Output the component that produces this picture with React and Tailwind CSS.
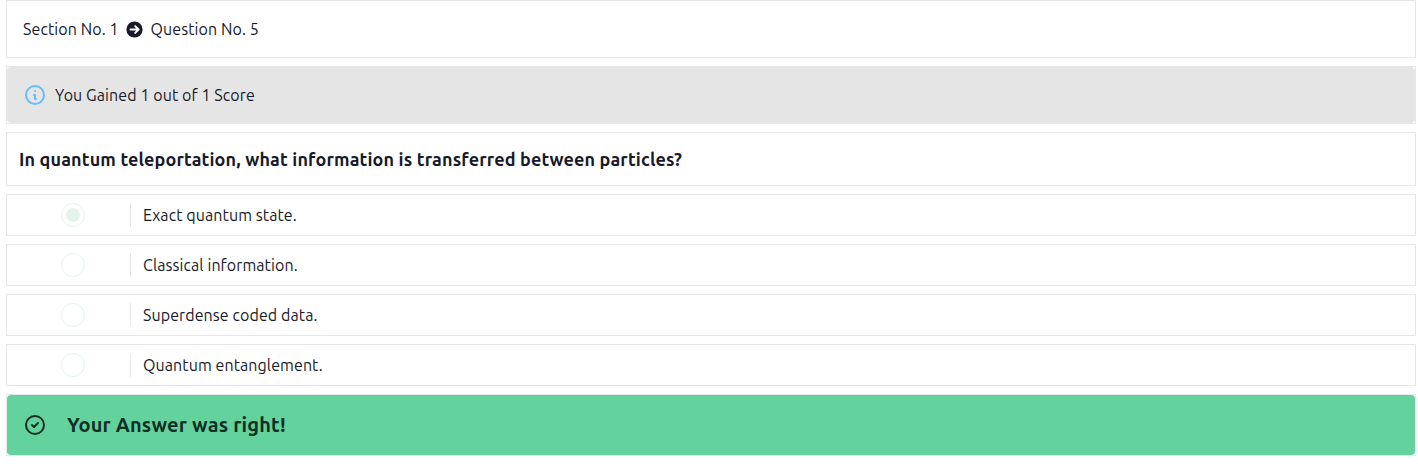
const options = [
  { text: "Exact quantum state.", checked: true },
  { text: "Classical information." },
  { text: "Superdense coded data." },
  { text: "Quantum entanglement." },
];

function Icon({ d, className = "" }) {
  return (
    <svg viewBox="0 0 24 24" fill="none" stroke="currentColor" strokeWidth="2" strokeLinecap="round" strokeLinejoin="round" className={`size-6 shrink-0 ${className}`}>
      <path d={d} />
    </svg>
  );
}

function ArrowCircle() {
  return (
    <svg viewBox="0 0 17 17" className="size-[17px] shrink-0">
      <circle cx="8.5" cy="8.5" r="8.1" fill="currentColor" />
      <path d="M4.5 8.5h8M9.2 5.1l3.4 3.4-3.4 3.4" fill="none" stroke="white" strokeWidth="1.9" strokeLinecap="round" strokeLinejoin="round" />
    </svg>
  );
}

function Option({ text, checked }) {
  return (
    <div className="flex h-[42px] items-center border border-[#e5e7eb]">
      <div className="flex w-[123px] shrink-0 justify-center pl-[9px]">
        <span className="flex size-6 items-center justify-center rounded-full border border-[#e4f3ec]">
          {checked && <span className="size-3.5 rounded-full bg-[#e4f3ec]" />}
        </span>
      </div>
      <div className="flex h-6 items-center border-l border-[#e5e7eb] pl-3">
        <span className="whitespace-nowrap">{text}</span>
      </div>
    </div>
  );
}

export default function App() {
  return (
    <main className="mr-0.5 ml-1.5 flex flex-col gap-2 bg-white font-['Ubuntu','Noto_Sans',sans-serif] text-base tracking-[0.09px] text-[#181a2a]">
      <header className="flex h-[58px] items-center border border-[#e5e7eb] pl-4 whitespace-nowrap">
        <span className="w-[103px]">Section No. 1</span>
        <ArrowCircle />
        <span className="ml-[7.5px]">Question No. 5</span>
      </header>
      <section className="h-[58px] border border-[#e5e7eb]">
        <div className="flex h-full items-center gap-2 rounded bg-[#e5e5e5] pl-4">
          <Icon className="text-[#66bdfb]" d="M13 16h-1v-4h-1m1-4h.01M21 12a9 9 0 11-18 0 9 9 0 0118 0z" />
          <span className="whitespace-nowrap">You Gained 1 out of 1 Score</span>
        </div>
      </section>
      <section className="flex h-[54px] items-center border border-[#e5e7eb] pl-3">
        <h1 className="text-lg font-bold tracking-[0.135px] whitespace-nowrap">In quantum teleportation, what information is transferred between particles?</h1>
      </section>
      {options.map((option) => (
        <Option key={option.text} {...option} />
      ))}
      <section className="h-[62px] border border-[#e5e7eb]">
        <div className="flex h-full items-center gap-5 rounded bg-[#64d29d] pl-4 text-[#102f25]">
          <Icon d="M9 12l2 2 4-4m6 2a9 9 0 11-18 0 9 9 0 0118 0z" />
          <strong className="text-xl font-bold tracking-[0.16px] whitespace-nowrap">Your Answer was right!</strong>
        </div>
      </section>
    </main>
  );
}
